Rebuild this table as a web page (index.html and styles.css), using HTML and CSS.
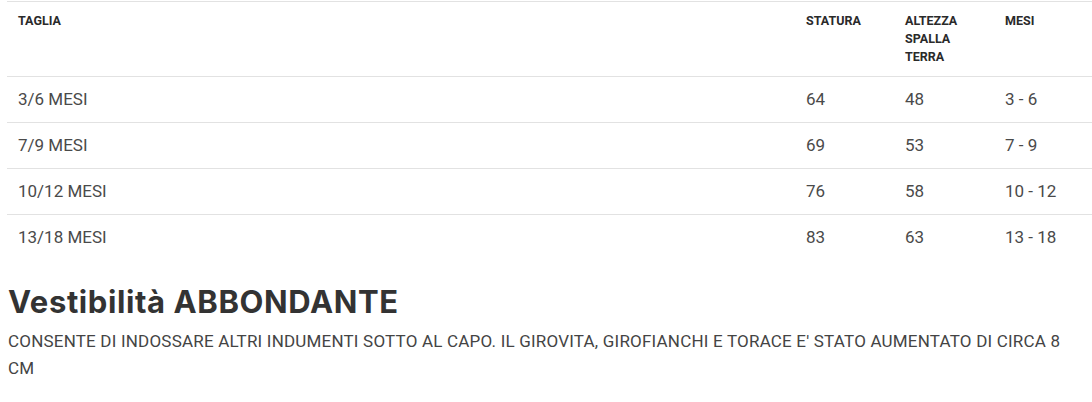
FILE: index.html
```html
<!DOCTYPE html>
<html lang="it">
<head>
<meta charset="utf-8">
<title>Taglie</title>
<link rel="stylesheet" href="styles.css">
</head>
<body>
<div class="page">
  <table class="sizes">
    <colgroup>
      <col class="c-taglia">
      <col class="c-num">
      <col class="c-num2">
      <col class="c-mesi">
    </colgroup>
    <thead>
      <tr>
        <th>Taglia</th>
        <th>Statura</th>
        <th>Altezza spalla terra</th>
        <th>Mesi</th>
      </tr>
    </thead>
    <tbody>
      <tr><td>3/6 MESI</td><td>64</td><td>48</td><td>3 - 6</td></tr>
      <tr><td>7/9 MESI</td><td>69</td><td>53</td><td>7 - 9</td></tr>
      <tr><td>10/12 MESI</td><td>76</td><td>58</td><td>10 - 12</td></tr>
      <tr><td>13/18 MESI</td><td>83</td><td>63</td><td>13 - 18</td></tr>
    </tbody>
  </table>
  <h2 class="fit-title">Vestibilità ABBONDANTE</h2>
  <p class="fit-text">CONSENTE DI INDOSSARE ALTRI INDUMENTI SOTTO AL CAPO. IL GIROVITA, GIROFIANCHI E TORACE E' STATO AUMENTATO DI CIRCA 8 CM</p>
</div>
</body>
</html>
```

FILE: styles.css
```css
html, body {
  margin: 0;
  padding: 0;
  background: #ffffff;
}

.page {
  padding: 1px 0 0 7px;
  width: 1085px;
  font-family: Roboto, "Liberation Sans", Arial, sans-serif;
  color: #444;
}

.sizes {
  width: 1085px;
  table-layout: fixed;
  border-collapse: collapse;
  border-spacing: 0;
}

.c-taglia { width: 788px; }
.c-num { width: 99px; }
.c-num2 { width: 100px; }
.c-mesi { width: 98px; }

.sizes th {
  text-align: left;
  vertical-align: top;
  font-size: 12.5px;
  line-height: 18px;
  font-weight: 700;
  text-transform: uppercase;
  color: #2a2a2a;
  padding: 10px 10px 10px 11px;
  border-top: 1px solid #e2e2e2;
}

.sizes td {
  text-align: left;
  vertical-align: middle;
  font-size: 17px;
  line-height: 25px;
  color: #4a4a4a;
  padding: 10px 10px 10px 11px;
  border-top: 1px solid #e2e2e2;
}

.fit-title {
  margin: 22px 0 0 1px;
  font-family: Inter, "Open Sans", sans-serif;
  font-size: 31px;
  line-height: 40px;
  letter-spacing: 0.6px;
  font-weight: 700;
  color: #333;
}

.fit-text {
  max-width: 1074px;
  margin: 6px 0 0 1px;
  font-size: 17px;
  line-height: 27px;
  letter-spacing: 0.2px;
  color: #444;
}
```
